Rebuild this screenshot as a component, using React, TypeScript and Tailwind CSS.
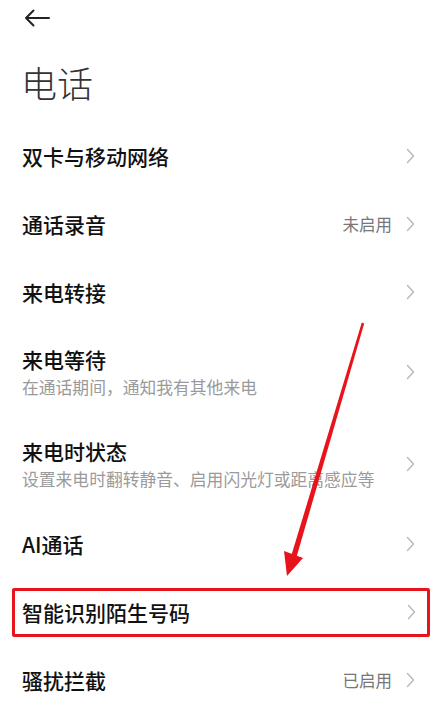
import React from "react"

const FONT = { fontFamily: '"Noto Sans CJK SC", "Noto Sans", sans-serif' }

type Row = { title: string; sub?: string; value?: string; boxed?: boolean }

const ROWS: Row[] = [
  { title: "双卡与移动网络" },
  { title: "通话录音", value: "未启用" },
  { title: "来电转接" },
  { title: "来电等待", sub: "在通话期间，通知我有其他来电" },
  { title: "来电时状态", sub: "设置来电时翻转静音、启用闪光灯或距离感应等" },
  { title: "AI通话" },
  { title: "智能识别陌生号码", boxed: true },
  { title: "骚扰拦截", value: "已启用" },
]

function Chevron() {
  return (
    <svg width="9" height="16" viewBox="0 0 9 16" fill="none" className="shrink-0">
      <polyline points="1.5,1.5 7.5,8 1.5,14.5" stroke="#b8b8b8" strokeWidth="1.4" strokeLinecap="round" strokeLinejoin="round" />
    </svg>
  )
}

function RowContent({ row }: { row: Row }) {
  return (
    <>
      <div className="flex-1 min-w-0">
        <div className="text-[21px] leading-[28px] font-medium text-[#111]">{row.title}</div>
        {row.sub && <div className="mt-[2px] text-[16.8px] leading-[24px] text-[#9a9a9a] whitespace-nowrap">{row.sub}</div>}
      </div>
      {row.value && <span className="mr-[14px] text-[16.5px] text-[#777]">{row.value}</span>}
      <Chevron />
    </>
  )
}

export default function App() {
  return (
    <div className="relative w-[442px] h-[711px] overflow-hidden bg-white" style={FONT}>
      {/* Header */}
      <div className="h-[36px] pl-[24px] flex items-center">
        <svg width="26" height="18" viewBox="0 0 26 18" fill="none">
          <path d="M25 9H2M9.5 1.5L2 9l7.5 7.5" stroke="#222" strokeWidth="2" strokeLinecap="round" strokeLinejoin="round" />
        </svg>
      </div>
      <div className="mt-[24px] pl-[21px] h-[44px] text-[36px] leading-[44px] font-light text-[#333]">电话</div>

      {/* List */}
      <div className="mt-[18px] flex flex-col">
        {ROWS.map(row =>
          row.boxed ? (
            <div key={row.title} className="h-[68px] px-[12px] flex items-center">
              <div className="flex-1 h-[49px] border-[3px] border-[#e8141c] rounded-[2px] flex items-center pl-[7px] pr-[11px]">
                <RowContent row={row} />
              </div>
            </div>
          ) : (
            <div key={row.title} className={`${row.sub ? "h-[92px]" : "h-[68px]"} pl-[22px] pr-[27px] flex items-center`}>
              <RowContent row={row} />
            </div>
          )
        )}
      </div>

      {/* Annotation arrow */}
      <svg className="absolute left-0 top-0 pointer-events-none" width="442" height="711" viewBox="0 0 442 711">
        <polygon points="364.2,323.4 361.8,322.6 291.4,555.3 296.6,556.7" fill="#e8141c" />
        <polygon points="284,551 303,558 287,576" fill="#e8141c" />
      </svg>
    </div>
  )
}
